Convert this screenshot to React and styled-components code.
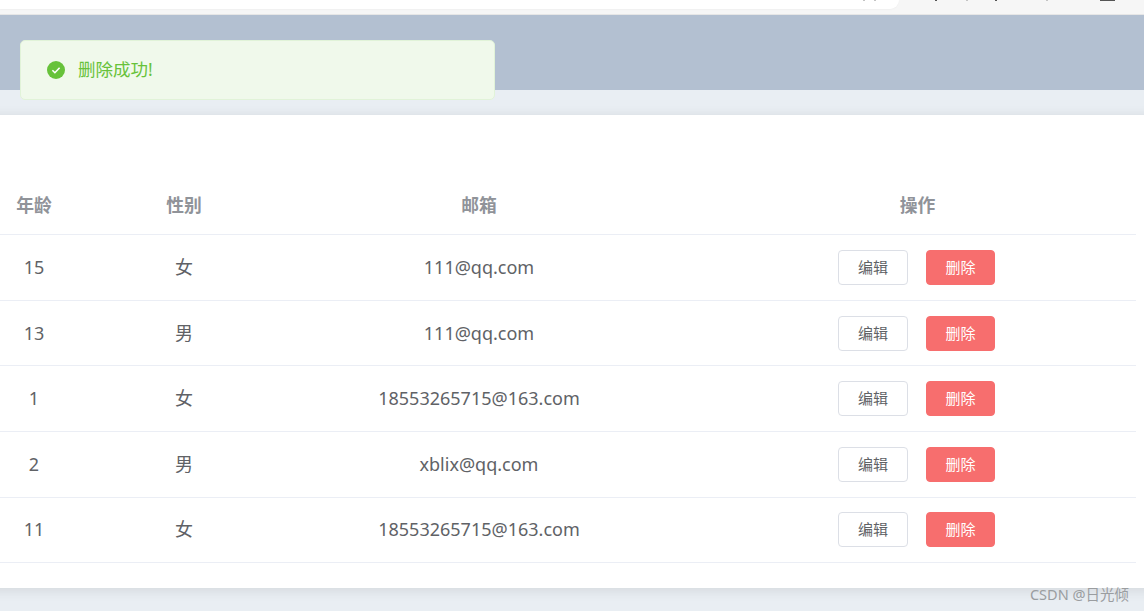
import React from 'react'
import styled, { createGlobalStyle } from 'styled-components'

const rows = [
  { age: 15, sex: '女', email: '111@qq.com' },
  { age: 13, sex: '男', email: '111@qq.com' },
  { age: 1, sex: '女', email: '18553265715@163.com' },
  { age: 2, sex: '男', email: 'xblix@qq.com' },
  { age: 11, sex: '女', email: '18553265715@163.com' },
]

const App = () => {
  return (
    <Page>
      <GlobalStyle />
      <BrowserBar>
        <AddressBar>
          <ToolTick $light $gap={863} />
          <ToolTick $light $gap={9} />
        </AddressBar>
        <ToolTick $gap={36} />
        <ToolTick $light $gap={29} />
        <ToolTick $gap={27} />
        <ToolTick $light $gap={49} />
        <ToolTick $wide $gap={52} />
      </BrowserBar>
      <Header />
      <Main>
        <Card>
          <Table>
            <colgroup>
              <col style={{ width: 150 }} />
              <col style={{ width: 150 }} />
              <col style={{ width: 440 }} />
              <col style={{ width: 437 }} />
            </colgroup>
            <thead>
              <tr>
                <HeadCell>年龄</HeadCell>
                <HeadCell>性别</HeadCell>
                <HeadCell>邮箱</HeadCell>
                <HeadCell>操作</HeadCell>
              </tr>
            </thead>
            <tbody>
              {rows.map((row, i) => (
                <tr key={i}>
                  <Cell $lift={1}>{row.age}</Cell>
                  <Cell $lift={3}>{row.sex}</Cell>
                  <Cell $lift={1}>{row.email}</Cell>
                  <Cell $lift={0}>
                    <Actions>
                      <Button>编辑</Button>
                      <Button $danger>删除</Button>
                    </Actions>
                  </Cell>
                </tr>
              ))}
            </tbody>
          </Table>
        </Card>
      </Main>
      <Message>
        <svg width="18" height="18" viewBox="0 0 18 18">
          <circle cx="9" cy="9" r="9" fill="#67c23a" />
          <path d="M5.4 9.2l2.5 2.5 4.7-4.9" fill="none" stroke="#fff" strokeWidth="1.6" />
        </svg>
        <MessageText>删除成功!</MessageText>
      </Message>
      <Watermark>CSDN @日光倾</Watermark>
    </Page>
  )
}

export default App

const GlobalStyle = createGlobalStyle`
html, body {
  margin: 0;
  padding: 0;
  background: #e9eef3;
}
`

const Page = styled.div`
position: relative;
width: 1144px;
height: 611px;
overflow: hidden;
display: flex;
flex-direction: column;
font-family: "Noto Sans", "Noto Sans CJK SC", sans-serif;
`

const BrowserBar = styled.div`
height: 14px;
flex-shrink: 0;
display: flex;
align-items: flex-start;
background: #f6f6f6;
border-bottom: 1px solid #e6e6e6;
`

const AddressBar = styled.div`
width: 899px;
height: 9px;
flex-shrink: 0;
display: flex;
align-items: flex-start;
background: #fff;
border-bottom-right-radius: 12px;
box-shadow: 0 1px 1px #f1f1f1;
`

const ToolTick = styled.span`
width: ${props => (props.$wide ? '15px' : '2px')};
height: 1px;
flex-shrink: 0;
margin-left: ${props => props.$gap}px;
background: ${props => (props.$light ? '#c4c4c4' : '#555')};
`

const Header = styled.div`
height: 75px;
flex-shrink: 0;
background: #b3c0d1;
position: relative;
z-index: 1;
`

const Main = styled.div`
flex: 1;
padding: 25px 0 23px;
min-height: 0;
background: #e9eef3;
`

const Card = styled.div`
height: 473px;
margin: 0 -20px;
padding: 65.2px 0 0 20px;
box-sizing: border-box;
background: #fff;
box-shadow: 0 2px 12px 0 rgba(0, 0, 0, 0.1);
`

const Table = styled.table`
width: 1177px;
margin-left: -41px;
border-collapse: collapse;
table-layout: fixed;
`

const HeadCell = styled.th`
height: 48px;
padding: 0 0 6px;
border-bottom: 1px solid #ebeef5;
color: #909399;
font-size: 17.8px;
font-weight: 700;
text-align: center;
`

const Cell = styled.td`
height: 65.6px;
box-sizing: border-box;
padding: 0 0 ${props => props.$lift}px;
border-bottom: 1px solid #ebeef5;
color: #606266;
font-size: 18px;
text-align: center;
`

const Actions = styled.div`
display: flex;
justify-content: center;
gap: 18px;
padding-right: 2px;
`

const Button = styled.button`
width: ${props => (props.$danger ? '69px' : '70px')};
height: 35px;
padding: 0 0 2px;
box-sizing: border-box;
border: 1px solid ${props => (props.$danger ? '#f76e6e' : '#dcdfe6')};
border-radius: 4px;
background: ${props => (props.$danger ? '#f76e6e' : '#fff')};
color: ${props => (props.$danger ? '#fff' : '#606266')};
font-family: inherit;
font-size: 15px;
`

const Message = styled.div`
position: absolute;
z-index: 2;
left: 20px;
top: 40px;
width: 475px;
height: 60px;
box-sizing: border-box;
padding-left: 26px;
display: flex;
align-items: center;
gap: 13px;
background: #f0f9eb;
border: 1px solid #e1f3d8;
border-radius: 5px;
`

const MessageText = styled.span`
padding-bottom: 3px;
color: #67c23a;
font-size: 17.5px;
`

const Watermark = styled.div`
position: absolute;
right: 15px;
bottom: 7px;
color: #9a9da0;
font-size: 14.5px;
`
